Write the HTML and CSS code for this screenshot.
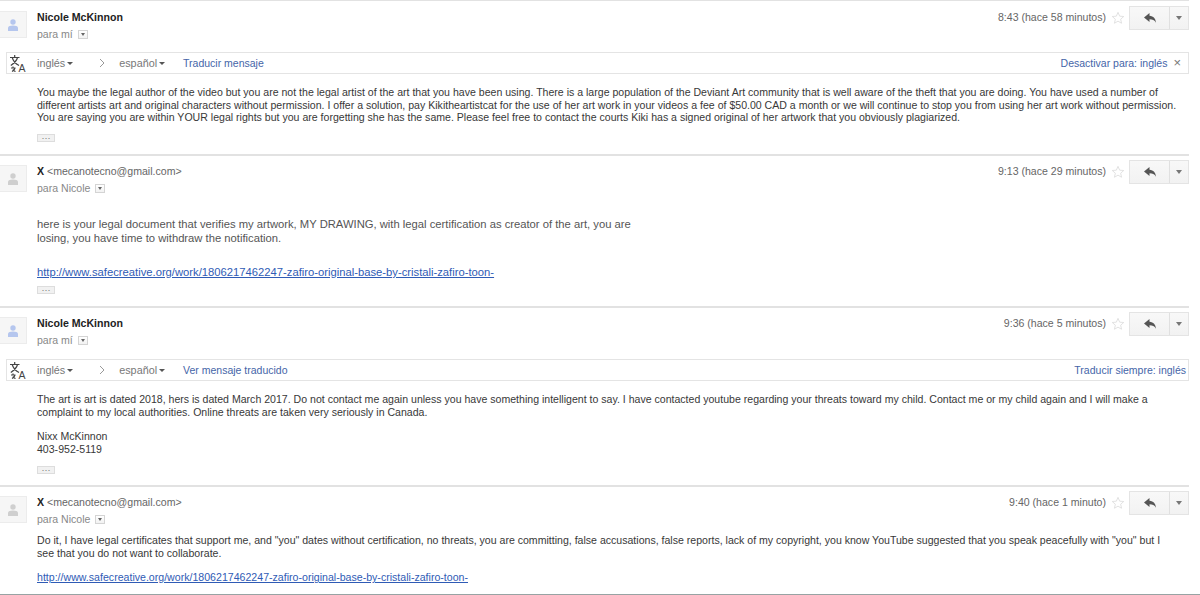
FILE: index.html
```html
<!DOCTYPE html>
<html lang="es">
<head>
<meta charset="utf-8">
<title>Mensajes</title>
<link rel="stylesheet" href="styles.css">
</head>
<body>
<main class="thread">

<article class="msg msg-a">
  <header class="head head-tall">
    <div class="avatar avatar-blue"><svg viewBox="0 0 10 12" width="10" height="12"><circle cx="5" cy="3" r="2.7"/><path d="M0 12V8.800C0 7.300 2.500 6.500 5 6.500s5 .8 5 2.300V12z"/></svg></div>
    <div class="who">
      <div class="name"><b>Nicole McKinnon</b></div>
      <div class="to">para mí <span class="caret-box"></span></div>
    </div>
    <div class="meta">
      <span class="time">8:43 (hace 58 minutos)</span>
      <svg class="star" viewBox="0 0 16 16" width="14" height="14"><path d="M8 1.500l1.900 4.400 4.700.4-3.600 3.100 1.100 4.600L8 11.600l-4.100 2.400L5 9.400 1.400 6.300l4.700-.4z"/></svg>
      <div class="reply"><span class="reply-main"><svg viewBox="0 0 12 10" width="12" height="10"><path d="M5.500 0L0 4.500 5.500 9V6.200c3 0 5 .9 6.500 3.500C11.500 5.500 9.500 3.200 5.500 2.800z"/></svg></span><span class="reply-more"></span></div>
    </div>
  </header>
  <div class="tbar">
    <svg class="tr-icon" viewBox="0 0 16 17" width="16" height="17"><path d="M0 2.500h9.500M4.700 0v2.500M7.500 2.500C6.800 5.500 4.500 8 .8 10.500M2.200 2.500c1 3.500 3 6 6.800 8M1 13h4.500M3 11.500V13M5 13c-.3 1.300-1.200 2.600-3 3.500M3 14.500c.5 1 1.300 1.700 2.500 2" class="tr-stroke"/><text x="8.500" y="16.500" class="tr-a">A</text></svg>
    <span class="lang first">inglés<i class="tri"></i></span>
    <svg class="chev" viewBox="0 0 6 10" width="6" height="10"><path d="M1 1l4 4-4 4"/></svg>
    <span class="lang">español<i class="tri"></i></span>
    <a class="link act">Traducir mensaje</a>
    <a class="link right">Desactivar para: inglés</a>
    <span class="close">×</span>
  </div>
  <div class="body body-a">
    <p>You maybe the legal author of the video but you are not the legal artist of the art that you have been using. There is a large population of the Deviant Art community that is well aware of the theft that you are doing. You have used a number of different artists art and original characters without permission. I offer a solution, pay Kikitheartistcat for the use of her art work in your videos a fee of $50.00 CAD a month or we will continue to stop you from using her art work without permission. You are saying you are within YOUR legal rights but you are forgetting she has the same. Please feel free to contact the courts Kiki has a signed original of her artwork that you obviously plagiarized.</p>
    <div class="dots">···</div>
  </div>
</article>

<article class="msg msg-b">
  <header class="head">
    <div class="avatar"><svg viewBox="0 0 10 12" width="10" height="12"><circle cx="5" cy="3" r="2.7"/><path d="M0 12V8.800C0 7.300 2.500 6.500 5 6.500s5 .8 5 2.300V12z"/></svg></div>
    <div class="who">
      <div class="name"><b>X</b> <span class="addr">&lt;mecanotecno@gmail.com&gt;</span></div>
      <div class="to">para Nicole <span class="caret-box"></span></div>
    </div>
    <div class="meta">
      <span class="time">9:13 (hace 29 minutos)</span>
      <svg class="star" viewBox="0 0 16 16" width="14" height="14"><path d="M8 1.500l1.900 4.400 4.700.4-3.600 3.100 1.100 4.600L8 11.600l-4.100 2.400L5 9.400 1.400 6.300l4.700-.4z"/></svg>
      <div class="reply"><span class="reply-main"><svg viewBox="0 0 12 10" width="12" height="10"><path d="M5.500 0L0 4.500 5.500 9V6.200c3 0 5 .9 6.500 3.500C11.500 5.500 9.500 3.200 5.500 2.800z"/></svg></span><span class="reply-more"></span></div>
    </div>
  </header>
  <div class="body body-b">
    <p class="gray">here is your legal document that verifies my artwork, MY DRAWING, with legal certification as creator of the art, you are<br>losing, you have time to withdraw the notification.</p>
    <p class="url-line"><a class="url">http://www.safecreative.org/work/1806217462247-zafiro-original-base-by-cristali-zafiro-toon-</a></p>
    <div class="dots dots-tight">···</div>
  </div>
</article>

<article class="msg msg-c">
  <header class="head head-c">
    <div class="avatar avatar-blue"><svg viewBox="0 0 10 12" width="10" height="12"><circle cx="5" cy="3" r="2.7"/><path d="M0 12V8.800C0 7.300 2.500 6.500 5 6.500s5 .8 5 2.300V12z"/></svg></div>
    <div class="who">
      <div class="name"><b>Nicole McKinnon</b></div>
      <div class="to">para mí <span class="caret-box"></span></div>
    </div>
    <div class="meta">
      <span class="time">9:36 (hace 5 minutos)</span>
      <svg class="star" viewBox="0 0 16 16" width="14" height="14"><path d="M8 1.500l1.900 4.400 4.700.4-3.600 3.100 1.100 4.600L8 11.600l-4.100 2.400L5 9.400 1.400 6.300l4.700-.4z"/></svg>
      <div class="reply"><span class="reply-main"><svg viewBox="0 0 12 10" width="12" height="10"><path d="M5.500 0L0 4.500 5.500 9V6.200c3 0 5 .9 6.500 3.500C11.500 5.500 9.500 3.200 5.500 2.800z"/></svg></span><span class="reply-more"></span></div>
    </div>
  </header>
  <div class="tbar">
    <svg class="tr-icon" viewBox="0 0 16 17" width="16" height="17"><path d="M0 2.500h9.500M4.700 0v2.500M7.500 2.500C6.800 5.500 4.500 8 .8 10.500M2.200 2.500c1 3.500 3 6 6.800 8M1 13h4.500M3 11.500V13M5 13c-.3 1.300-1.200 2.600-3 3.500M3 14.500c.5 1 1.300 1.700 2.500 2" class="tr-stroke"/><text x="8.500" y="16.500" class="tr-a">A</text></svg>
    <span class="lang first">inglés<i class="tri"></i></span>
    <svg class="chev" viewBox="0 0 6 10" width="6" height="10"><path d="M1 1l4 4-4 4"/></svg>
    <span class="lang">español<i class="tri"></i></span>
    <a class="link act">Ver mensaje traducido</a>
    <a class="link right right-end">Traducir siempre: inglés</a>
  </div>
  <div class="body body-c">
    <p>The art is art is dated 2018, hers is dated March 2017. Do not contact me again unless you have something intelligent to say. I have contacted youtube regarding your threats toward my child. Contact me or my child again and I will make a complaint to my local authorities. Online threats are taken very seriously in Canada.</p>
    <p class="sig">Nixx McKinnon<br>403-952-5119</p>
    <div class="dots dots-c">···</div>
  </div>
</article>

<article class="msg msg-d">
  <header class="head head-short">
    <div class="avatar"><svg viewBox="0 0 10 12" width="10" height="12"><circle cx="5" cy="3" r="2.7"/><path d="M0 12V8.800C0 7.300 2.500 6.500 5 6.500s5 .8 5 2.300V12z"/></svg></div>
    <div class="who">
      <div class="name"><b>X</b> <span class="addr">&lt;mecanotecno@gmail.com&gt;</span></div>
      <div class="to">para Nicole <span class="caret-box"></span></div>
    </div>
    <div class="meta">
      <span class="time">9:40 (hace 1 minuto)</span>
      <svg class="star" viewBox="0 0 16 16" width="14" height="14"><path d="M8 1.500l1.900 4.400 4.700.4-3.600 3.100 1.100 4.600L8 11.600l-4.100 2.400L5 9.400 1.400 6.300l4.700-.4z"/></svg>
      <div class="reply"><span class="reply-main"><svg viewBox="0 0 12 10" width="12" height="10"><path d="M5.500 0L0 4.500 5.500 9V6.200c3 0 5 .9 6.500 3.500C11.500 5.500 9.500 3.200 5.500 2.800z"/></svg></span><span class="reply-more"></span></div>
    </div>
  </header>
  <div class="body body-d">
    <p>Do it, I have legal certificates that support me, and "you" dates without certification, no threats, you are committing, false accusations, false reports, lack of my copyright, you know YouTube suggested that you speak peacefully with "you" but I see that you do not want to collaborate.</p>
    <p class="url-line-d"><a class="url url-small">http://www.safecreative.org/work/1806217462247-zafiro-original-base-by-cristali-zafiro-toon-</a></p>
  </div>
</article>

</main>
<div class="edge"></div>
</body>
</html>
```
FILE: styles.css
```css
* { box-sizing: border-box; }
html, body { margin: 0; height: 595px; overflow: hidden; background: #fff; }
body { font-family: "Liberation Sans", Arial, sans-serif; font-size: 10.570px; line-height: 12.600px; color: #383838; position: relative; }
p { margin: 0; }
.thread { display: flex; flex-direction: column; margin-top: -1px; margin-right: 11px; }
.msg { border-top: 2px solid #e2e2e2; }
.msg-a { height: 155px; }
.msg-b { height: 152px; }
.msg-c { height: 179px; }
.msg-d { height: 110px; }
.head { display: flex; align-items: flex-start; height: 50px; }
.head-tall { height: 51px; padding-top: 1px; }
.head-c { height: 51px; }
.head-short { height: 47px; }
.avatar { width: 27px; height: 27px; margin-top: 9px; border: 1px solid #ececec; border-left: 0; background: #f6f6f6; display: flex; align-items: center; justify-content: center; flex: none; }
.avatar svg { fill: #cfcfcf; }
.avatar-blue svg { fill: #b5c6ee; }
.who { margin-left: 10px; margin-top: 9px; flex: 1; }
.name { line-height: 13px; }
.name b { font-weight: 700; font-size: 10.600px; color: #222; }
.addr { color: #666; }
.to { margin-top: 3px; color: #888; display: flex; align-items: center; gap: 5px; line-height: 14px; }
.caret-box { width: 10px; height: 9px; border: 1px solid #d4d4d4; background: linear-gradient(#fff, #f2f2f2); position: relative; display: inline-block; }
.caret-box::after { content: ""; position: absolute; left: 2px; top: 2px; border: 2px solid transparent; border-top: 3px solid #666; }
.meta { display: flex; align-items: flex-start; color: #666; }
.time { margin-top: 9px; line-height: 13px; }
.star { margin: 9px 0 0 5px; fill: none; stroke: #dedede; stroke-width: 1; }
.reply { display: flex; height: 24px; margin-left: 4px; margin-top: 4px; border: 1px solid #e4e4e4; background: linear-gradient(#f8f8f8, #f2f2f2); }
.reply-main { width: 40px; display: flex; align-items: center; justify-content: center; border-right: 1px solid #e0e0e0; }
.reply-main svg { fill: #555; }
.reply-more { width: 18px; position: relative; }
.reply-more::after { content: ""; position: absolute; left: 6px; top: 9px; border: 3px solid transparent; border-top: 4px solid #777; border-bottom: 0; }
.tbar { display: flex; align-items: center; height: 22px; margin-left: 6px; border: 1px solid #e4e4e4; color: #777; }
.tr-icon { margin-left: 3px; flex: none; }
.tr-stroke { fill: none; stroke: #444; stroke-width: 1.200; }
.tr-a { font-family: "Liberation Sans", Arial, sans-serif; font-size: 10.500px; fill: #444; }
.lang { display: inline-flex; align-items: center; font-size: 10.800px; }
.lang.first { margin-left: 11px; }
.tri { display: inline-block; border: 3px solid transparent; border-top: 3px solid #555; border-bottom: 0; margin-left: 2px; }
.chev { margin: 0 14px 0 26px; fill: none; stroke: #999; flex: none; }
.link { color: #4565a8; cursor: pointer; font-size: 10.500px; }
.act { margin-left: 18px; }
.right { margin-left: auto; }
.right-end { margin-right: 2px; }
.close { color: #777; font-size: 13px; margin: 0 7px 0 6px; }
.body { padding-left: 37px; padding-right: 12px; }
.body-a { padding-top: 12px; }
.body-b { padding-top: 11px; }
.body-c { padding-top: 12px; }
.body-d { padding-top: 0; }
.gray { color: #555; line-height: 14px; font-size: 11.240px; }
.url { color: #2f5bb5; text-decoration: underline; font-size: 11.240px; }
.url-small { font-size: 10.600px; }
.url-line { margin-top: 20px; line-height: 14px; }
.url-line-d { margin-top: 11px; line-height: 14px; }
.sig { margin-top: 12px; }
.dots { width: 18px; height: 8px; margin-top: 10px; border: 1px solid #ddd; background: #f1f1f1; color: #777; font-size: 9px; line-height: 6px; text-align: center; overflow: hidden; }
.dots-tight { margin-top: 7px; }
.dots-c { margin-top: 11px; }
.edge { position: absolute; left: 0; right: 0; bottom: 0; height: 1px; background: #97a3a3; }
```
